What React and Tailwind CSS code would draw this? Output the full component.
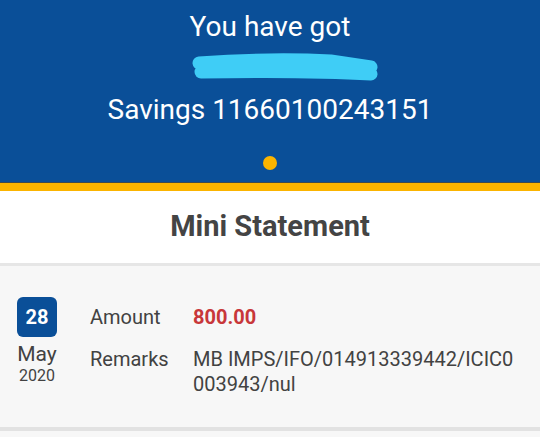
import React from 'react';

export default function App() {
  return (
    <div className="w-[540px] h-[437px] overflow-hidden bg-[#f7f7f7] font-['Roboto',sans-serif]">
      <div className="bg-[#0a4f98] h-[182px] flex flex-col items-center pt-[10px] text-white">
        <div className="text-[28px] leading-[34px]">You have got</div>
        <svg width="190" height="30" viewBox="0 0 190 30" className="mt-[9px] ml-[32px]">
          <path d="M8 10 C50 7 100 6 140 8 L180 14 M10 19 C70 18 130 18 180 21" stroke="#3fcdf6" strokeWidth="13" strokeLinecap="round" fill="none" />
        </svg>
        <div className="text-[28px] leading-[34px] mt-[10px]">Savings 11660100243151</div>
        <div className="w-[14px] h-[14px] rounded-full bg-[#fbb400] mt-[29px]" />
      </div>
      <div className="h-[1px] bg-[#3d4a50]" />
      <div className="h-[8px] bg-[#fbb400]" />
      <div className="bg-white h-[75px] flex items-center justify-center border-b-[3px] border-[#e6e6e6]">
        <div className="text-[29px] font-bold text-[#444444]">Mini Statement</div>
      </div>
      <div className="flex px-[17px] pt-[31px] h-[165px] border-b-[4px] border-[#e2e2e2]">
        <div className="flex flex-col items-center w-[40px]">
          <div className="w-[40px] h-[40px] rounded-[6px] bg-[#0a4f98] text-white font-bold text-[20px] flex items-center justify-center">28</div>
          <div className="text-[21px] leading-[22px] text-[#424242] mt-[6px]">May</div>
          <div className="text-[16px] leading-[17px] text-[#424242] mt-[2px]">2020</div>
        </div>
        <div className="ml-[33px] flex flex-col text-[20px] text-[#424242]">
          <div className="flex leading-[25px] mt-[8px]">
            <div className="w-[103px]">Amount</div>
            <div className="font-bold text-[#c8373a]">800.00</div>
          </div>
          <div className="flex leading-[25px] mt-[17px]">
            <div className="w-[103px] shrink-0">Remarks</div>
            <div className="w-[340px]">MB IMPS/IFO/014913339442/ICIC0<br />003943/nul</div>
          </div>
        </div>
      </div>
    </div>
  );
}
